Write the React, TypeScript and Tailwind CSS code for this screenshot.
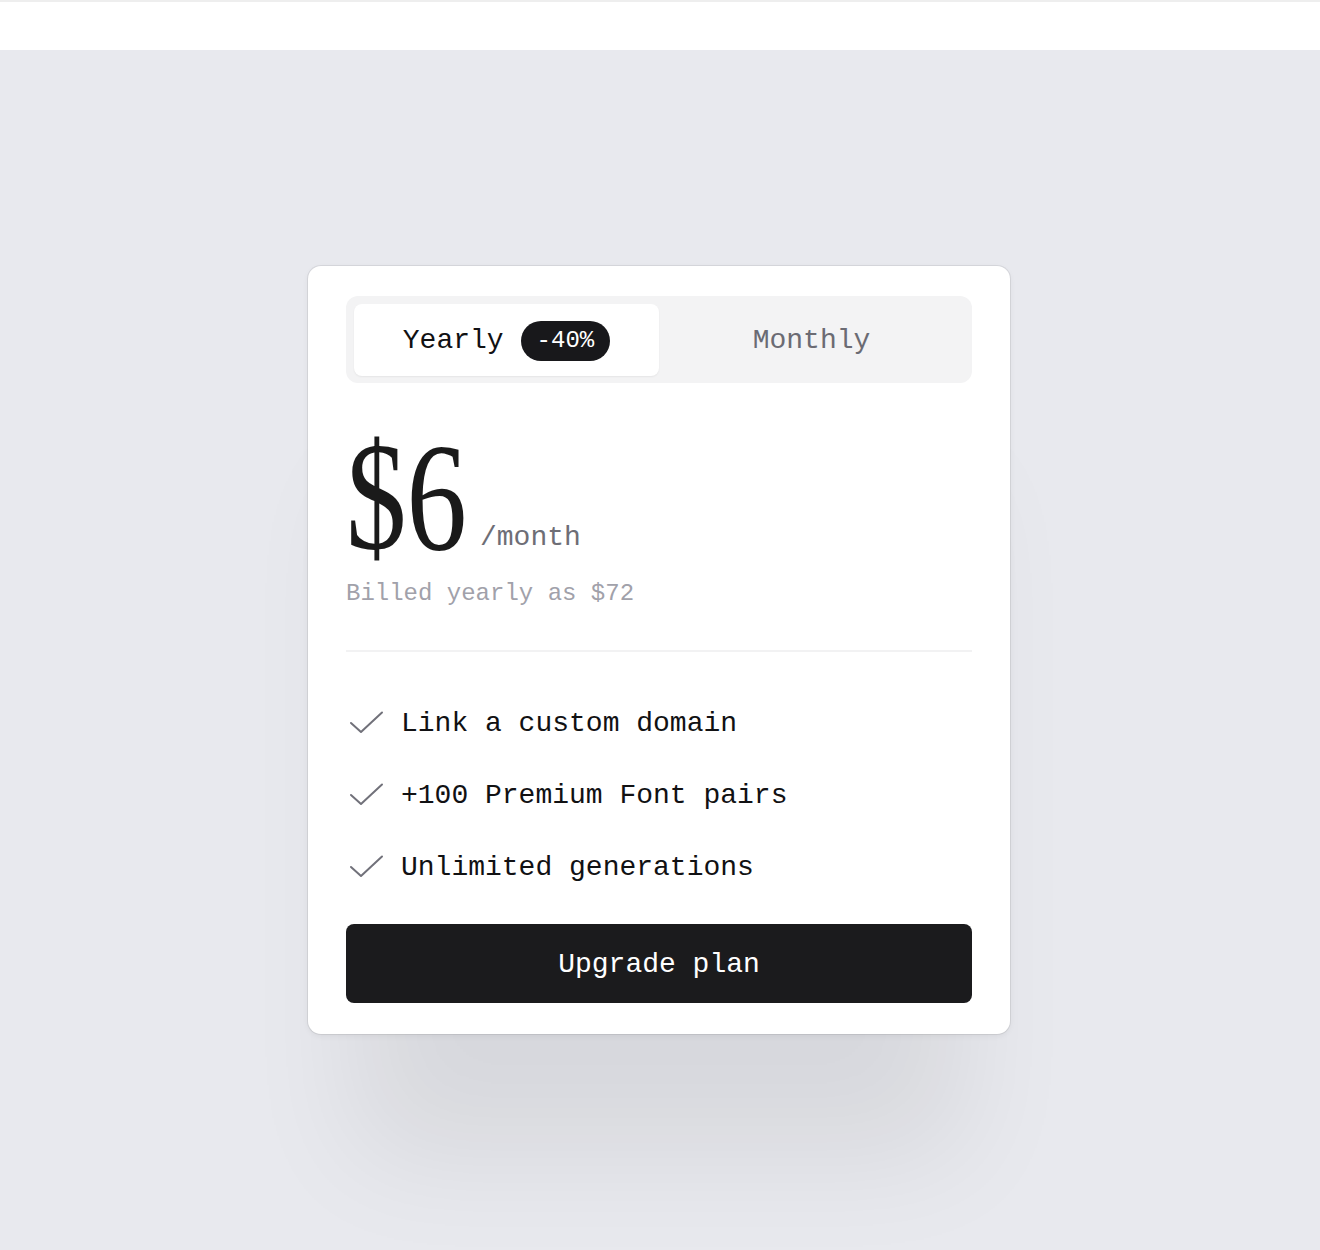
import React, { useState } from "react";

const mono = { fontFamily: '"Liberation Mono", "DejaVu Sans Mono", monospace' };

function Check() {
  return (
    <svg width="40" height="26" viewBox="0 0 40 26" fill="none" className="shrink-0">
      <path d="M5 12 L15 21 L36 1.5" stroke="#71717a" strokeWidth="2" strokeLinecap="round" strokeLinejoin="round" />
    </svg>
  );
}

export default function App() {
  const [yearly, setYearly] = useState(true);
  const features = ["Link a custom domain", "+100 Premium Font pairs", "Unlimited generations"];
  return (
    <div className="min-h-screen flex flex-col" style={mono}>
      <div className="h-[50px] bg-white border-t-2 border-[#eeeeee] shrink-0" />
      <div className="flex-1 bg-[#e8e9ee] pt-[216px] pb-[40px] pr-[2px]">
        <div className="mx-auto w-[702px] bg-white rounded-[13px] px-[38px] pt-[30px] pb-[31px] shadow-[0_0_0_1px_rgba(0,0,0,0.07),0_2px_6px_rgba(0,0,0,0.06),0_170px_110px_-50px_rgba(0,0,0,0.075)]">
          <div className="grid grid-cols-2 bg-[#f3f3f4] rounded-[12px] p-2 pb-[7px]">
            <button
              onClick={() => setYearly(true)}
              className={`h-[72px] pt-[2px] flex items-center justify-center gap-[17px] rounded-[8px] ${yearly ? "bg-white shadow-[0_1px_2px_rgba(0,0,0,0.06)] text-[#111113]" : "text-[#6b6b73]"}`}
            >
              <span className="text-[28px]">Yearly</span>
              <span className="h-[40px] px-[16px] rounded-full bg-[#18181b] text-white text-[24px] flex items-center">-40%</span>
            </button>
            <button
              onClick={() => setYearly(false)}
              className={`h-[72px] pt-[2px] flex items-center justify-center rounded-[8px] ${!yearly ? "bg-white shadow-[0_1px_2px_rgba(0,0,0,0.06)] text-[#111113]" : "text-[#6b6b73]"}`}
            >
              <span className="text-[28px]">Monthly</span>
            </button>
          </div>

          <div className="mt-[37px] flex items-baseline gap-[13px]">
            <div className="w-[121px]">
              <span
                className="inline-block origin-left scale-x-[0.78] text-[155px] leading-none text-[#1a1a1a]"
                style={{ fontFamily: '"Liberation Serif", "DejaVu Serif", serif' }}
              >
                {yearly ? "$6" : "$10"}
              </span>
            </div>
            <span className="text-[28px] text-[#6e6e76] -translate-y-[4px]">/month</span>
          </div>
          <div className="mt-[2px] text-[24px] leading-[1.44] text-[#a1a1aa]">
            {yearly ? "Billed yearly as $72" : "Billed monthly"}
          </div>

          <div className="mt-[38px] h-[2px] bg-[#f2f2f3]" />

          <ul className="mt-[36px]">
            {features.map((f) => (
              <li key={f} className="h-[72px] flex items-center gap-[15px]">
                <Check />
                <span className="text-[28px] text-[#111113]">{f}</span>
              </li>
            ))}
          </ul>

          <button className="mt-[20px] w-full h-[79px] pt-[4px] rounded-[8px] bg-[#1b1b1d] text-white text-[28px] flex items-center justify-center">
            Upgrade plan
          </button>
        </div>
      </div>
    </div>
  );
}
